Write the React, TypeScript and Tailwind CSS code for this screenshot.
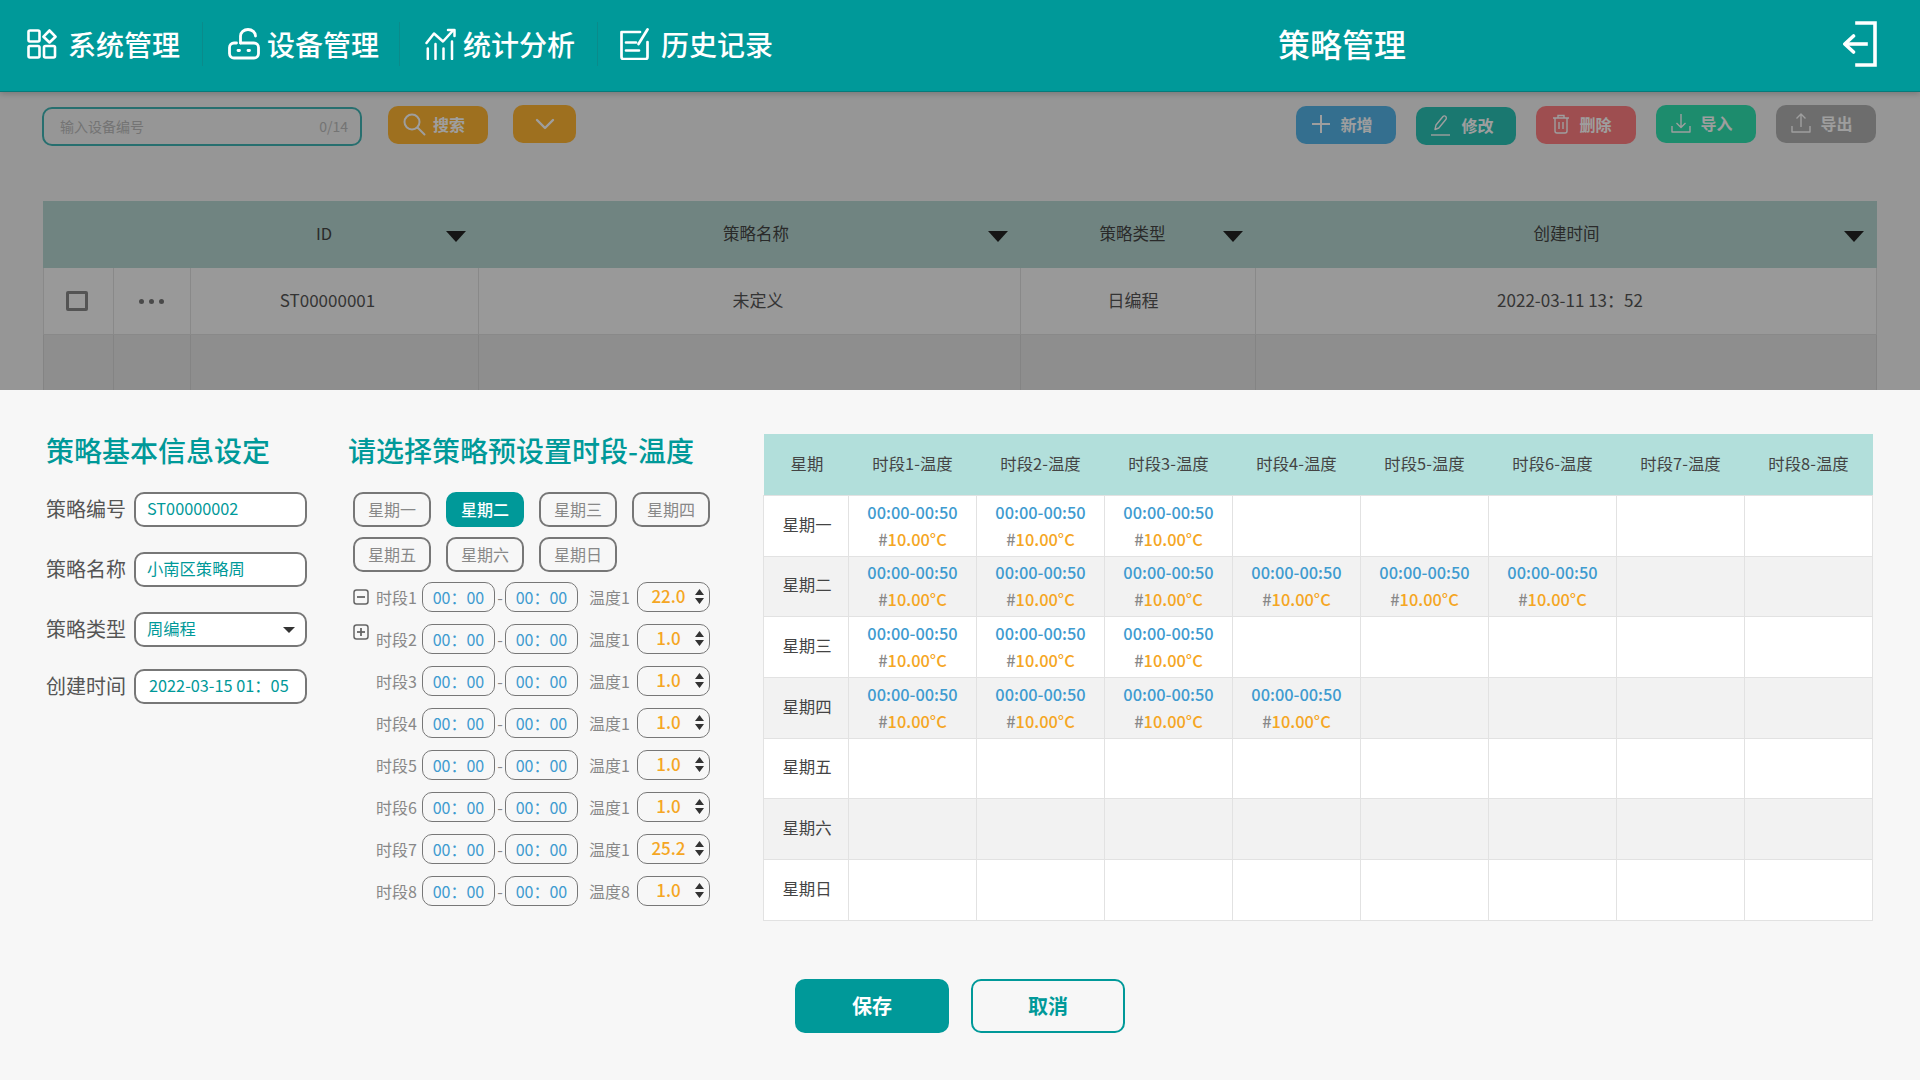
import { ReactNode } from "react";

const navIcons: Record<string, ReactNode> = {
  system: (
    <svg width="30" height="30" viewBox="0 0 30 30" fill="none" stroke="currentColor" strokeWidth="2.6" strokeLinejoin="round">
      <rect x="1.5" y="1.5" width="11" height="11" rx="1.5" />
      <path d="M22.5 1.5l6 6.2-6 5.800-6-5.800z" />
      <rect x="1.5" y="17" width="11" height="11.5" rx="1.5" />
      <rect x="17" y="17" width="11" height="11.5" rx="1.5" />
    </svg>
  ),
  device: (
    <svg width="32" height="32" viewBox="0 0 32 32" fill="none" stroke="currentColor" strokeWidth="2.8" strokeLinecap="round" strokeLinejoin="round">
      <path d="M12.5 15V8a7.500 6.500 0 0 1 15 0" />
      <path d="M8.500 15H6a4.500 4.500 0 0 0-4.500 4.500v6A4.500 4.500 0 0 0 6 30h20a4.500 4.500 0 0 0 4.500-4.500v-6A4.500 4.500 0 0 0 26 15H12.500" />
      <path d="M10 22.500h1.500M20 22.500h1.500" />
    </svg>
  ),
  chart: (
    <svg width="32" height="32" viewBox="0 0 32 32" fill="none" stroke="currentColor" strokeWidth="2.500" strokeLinecap="round" strokeLinejoin="round">
      <path d="M1.500 15L9 5.500l9 8L28 2.500" />
      <path d="M23 2h6.500v6" />
      <path d="M2.800 20.500V31M10.500 16V31M18.500 20.500V31M27 13.500V31" />
    </svg>
  ),
  record: (
    <svg width="30" height="32" viewBox="0 0 30 32" fill="none" stroke="currentColor" strokeWidth="2.700" strokeLinecap="round" strokeLinejoin="round">
      <path d="M20 4H1.500v25a2 2 0 0 0 2 2h22a2 2 0 0 0 2-2V14" />
      <path d="M6 14.500h10M6 22.500h13" />
      <path d="M18.500 16l9-14.500" />
    </svg>
  ),
};

const navItems = [
  { key: "system", label: "系统管理", width: "w-[203px]", pad: "pl-[27px]", gap: "gap-[11px]" },
  { key: "device", label: "设备管理", width: "w-[197px]", pad: "pl-[25px]", gap: "gap-[7px]" },
  { key: "chart", label: "统计分析", width: "w-[198px]", pad: "pl-[25px]", gap: "gap-[6px]" },
  { key: "record", label: "历史记录", width: "w-[200px]", pad: "pl-[22px]", gap: "gap-[11px]" },
];

function ToolButton({ bg, icon, label, shift = "" }: { bg: string; icon: ReactNode; label: string; shift?: string }) {
  return (
    <button className={`w-[100px] h-[38px] rounded-[10px] pr-[8px] pb-[2px] flex items-center justify-center gap-[9px] text-[16px] font-bold text-white ${bg} ${shift}`}>
      {icon}
      <span>{label}</span>
    </button>
  );
}

const columns = [
  { label: "", width: "w-[71px]", arrow: false, pad: "" },
  { label: "", width: "w-[77px]", arrow: false, pad: "" },
  { label: "ID", width: "w-[288px]", arrow: true, pad: "pr-[22px]" },
  { label: "策略名称", width: "w-[542px]", arrow: true, pad: "pl-[12px]" },
  { label: "策略类型", width: "w-[235px]", arrow: true, pad: "pr-[12px]" },
  { label: "创建时间", width: "flex-1", arrow: true, pad: "" },
];

const weekNames = ["星期一", "星期二", "星期三", "星期四", "星期五", "星期六", "星期日"];
const rowHeights = ["h-[61px]", "h-[60px]", "h-[61px]", "h-[61px]", "h-[60px]", "h-[61px]", "h-[61px]"];
const slots = [
  { id: 1, temp: "22.0", tempLabel: "温度1" },
  { id: 2, temp: "1.0", tempLabel: "温度1" },
  { id: 3, temp: "1.0", tempLabel: "温度1" },
  { id: 4, temp: "1.0", tempLabel: "温度1" },
  { id: 5, temp: "1.0", tempLabel: "温度1" },
  { id: 6, temp: "1.0", tempLabel: "温度1" },
  { id: 7, temp: "25.2", tempLabel: "温度1" },
  { id: 8, temp: "1.0", tempLabel: "温度8" },
];
const filledCounts = [3, 6, 3, 4, 0, 0, 0];

function FormRow({ label, value, select, className = "", textClass = "pl-[11px] text-[16.3px]" }: { label: string; value: string; select?: boolean; className?: string; textClass?: string }) {
  return (
    <div className={`flex items-center ${className}`}>
      <span className="w-[88px] text-[20px] text-[#555] pb-[2px]">{label}</span>
      <div className={`relative w-[173px] h-[35px] rounded-[10px] border-2 border-[#777] bg-white pb-[2px] flex items-center text-[#009999] ${textClass}`}>
        {value}
        {select && <span className="absolute right-[10px] top-[13px] border-x-[6px] border-t-[6px] border-x-transparent border-t-[#333]" />}
      </div>
    </div>
  );
}

function TimeBox() {
  return (
    <div className="w-[73px] h-[30px] rounded-[10px] border border-[#777] flex items-center justify-center text-[16px] text-[#3f9bd0] bg-[#f7f7f7]">
      00：00
    </div>
  );
}

function BoxIcon({ plus }: { plus?: boolean }) {
  return (
    <svg width="16" height="16" viewBox="0 0 16 16" fill="none" stroke="#666" strokeWidth="1.5">
      <rect x="1" y="1" width="14" height="14" rx="2.5" />
      <path d="M4 8h8" strokeWidth="1.8" />
      {plus && <path d="M8 4v8" strokeWidth="1.8" />}
    </svg>
  );
}

export default function App() {
  return (
    <div className="relative w-[1920px] h-[1080px] overflow-hidden bg-[#f2f2f2] font-['Noto_Sans_CJK_SC',sans-serif]">
      {/* 顶栏 */}
      <header className="relative z-20 h-[92px] pb-[3px] bg-[#009999] border-b border-[#067a7a] shadow-[0_2px_6px_rgba(0,0,0,0.2)] flex items-center text-white">
        <nav className="flex items-center">
          {navItems.map((item, i) => (
            <div
              key={item.key}
              className={`${item.width} ${item.pad} ${item.gap} h-[44px] flex items-center ${i < 3 ? "border-r border-[#0a8b8b]" : ""}`}
            >
              {navIcons[item.key]}
              <span className="text-[28px] leading-none font-medium">{item.label}</span>
            </div>
          ))}
        </nav>
        <div className="ml-auto flex items-center pr-[43px]">
          <h1 className="text-[32px] font-medium leading-none -translate-y-[1px]">策略管理</h1>
          <svg className="ml-[437px]" width="34" height="46" viewBox="0 0 34 46" fill="none" stroke="currentColor" strokeWidth="3.600" strokeLinecap="square">
            <path d="M14 2h18v42H14" />
            <path d="M23 23H4" />
            <path d="M10.500 15L1.800 23l8.700 8" strokeLinecap="round" strokeLinejoin="round" />
          </svg>
        </div>
      </header>

      {/* 工具栏 */}
      <div className="pl-[42px] pr-[44px] h-[109px] flex items-start">
        <div className="mt-[15px] w-[320px] h-[39px] rounded-[10px] border-[2.5px] border-[#40b4b4] pl-[16px] pr-[12px] flex items-center justify-between text-[14px] text-[#bbb]">
          <span>输入设备编号</span>
          <span>0/14</span>
        </div>
        <button className="ml-[26px] mt-[14px] w-[100px] h-[38px] rounded-[10px] bg-[#ffb532] pr-[9px] pb-[2px] flex items-center justify-center gap-[7px] text-[16px] font-bold text-white">
          <svg width="24" height="24" viewBox="0 0 24 24" fill="none" stroke="currentColor" strokeWidth="2" strokeLinecap="round">
            <circle cx="10" cy="10" r="7.500" />
            <path d="M15.500 15.500l7 7" />
          </svg>
          搜索
        </button>
        <button className="ml-[25px] mt-[13px] w-[63px] h-[38px] rounded-[10px] bg-[#ffb532] flex items-center justify-center text-white">
          <svg width="20" height="12" viewBox="0 0 20 12" fill="none" stroke="currentColor" strokeWidth="2.400" strokeLinecap="round" strokeLinejoin="round">
            <path d="M2 2l8 8 8-8" />
          </svg>
        </button>
        <div className="ml-auto flex gap-[20px]">
          <ToolButton
            bg="bg-[#55b3e7]"
            shift="mt-[14px]"
            label="新增"
            icon={
              <svg width="20" height="20" viewBox="0 0 20 20" stroke="currentColor" strokeWidth="2">
                <path d="M10 1v18M1 10h18" />
              </svg>
            }
          />
          <ToolButton
            bg="bg-[#2ac2b5]"
            shift="mt-[15px]"
            label="修改"
            icon={
              <svg width="22" height="22" viewBox="0 0 22 22" fill="none" stroke="currentColor" strokeWidth="1.400" strokeLinejoin="round">
                <path d="M5 15.500l1-4.500 7-8.500a1.800 1.800 0 0 1 3 .3l.3 1a2 2 0 0 1-.5 1.700l-7 8.500z" />
                <path d="M1 21h19" />
              </svg>
            }
          />
          <ToolButton
            bg="bg-[#ff7f81]"
            shift="mt-[14px]"
            label="删除"
            icon={
              <svg width="18" height="20" viewBox="0 0 18 20" fill="none" stroke="currentColor" strokeWidth="1.400">
                <path d="M1 4h16M6 4V1.500h6V4M3 4v13a2 2 0 0 0 2 2h8a2 2 0 0 0 2-2V4M7 8v7M11 8v7" />
              </svg>
            }
          />
          <ToolButton
            bg="bg-[#30e2b1]"
            shift="mt-[13px]"
            label="导入"
            icon={
              <svg width="20" height="20" viewBox="0 0 20 20" fill="none" stroke="currentColor" strokeWidth="1.400" strokeLinejoin="round">
                <path d="M1 13v6h18v-6M10 1v13M5.500 10l4.500 4.500 4.500-4.500" />
              </svg>
            }
          />
          <ToolButton
            bg="bg-[#b1b1b1]"
            shift="mt-[13px]"
            label="导出"
            icon={
              <svg width="20" height="20" viewBox="0 0 20 20" fill="none" stroke="currentColor" strokeWidth="1.400" strokeLinejoin="round">
                <path d="M1 13v6h18v-6M10 14V1M5.500 5.500L10 1l4.500 4.500" />
              </svg>
            }
          />
        </div>
      </div>

      {/* 列表 */}
      <div className="mx-[43px]">
        <div className="flex h-[67px] bg-[#b5d6d0] text-[16.5px] text-[#444]">
          {columns.map((col, i) => (
            <div key={i} className={`relative h-full pb-[3px] flex items-center justify-center ${col.width} ${col.pad}`}>
              {col.label}
              {col.arrow && (
                <span className="absolute right-[13px] top-[30px] border-x-[10px] border-t-[11px] border-x-transparent border-t-[#222]" />
              )}
            </div>
          ))}
        </div>
        <div className="flex h-[67px] bg-[#f7f7f7] text-[17px] text-[#555] border-b border-[#ddd]">
          <div className="w-[71px] pr-[4px] flex items-center justify-center border-x border-[#ddd]">
            <span className="w-[22px] h-[20px] rounded-[2px] border-[3px] border-[#888]" />
          </div>
          <div className="w-[77px] pr-[2px] flex items-center justify-center border-r border-[#ddd] gap-[5px]">
            {[0, 1, 2].map((d) => (
              <span key={d} className="w-[5px] h-[5px] rounded-full bg-[#777]" />
            ))}
          </div>
          <div className="w-[288px] pr-[14px] pb-[2px] flex items-center justify-center border-r border-[#ddd]">ST00000001</div>
          <div className="w-[542px] pl-[17px] pb-[2px] flex items-center justify-center border-r border-[#ddd]">未定义</div>
          <div className="w-[235px] pr-[10px] pb-[2px] flex items-center justify-center border-r border-[#ddd]">日编程</div>
          <div className="flex-1 pl-[8px] pb-[2px] flex items-center justify-center border-r border-[#ddd]">2022-03-11 13：52</div>
        </div>
        <div className="flex h-[60px] bg-[#e5e5e5]">
          <div className="w-[71px] border-x border-[#d6d6d6]" />
          <div className="w-[77px] border-r border-[#d6d6d6]" />
          <div className="w-[288px] border-r border-[#d6d6d6]" />
          <div className="w-[542px] border-r border-[#d6d6d6]" />
          <div className="w-[235px] border-r border-[#d6d6d6]" />
          <div className="flex-1 border-r border-[#d6d6d6]" />
        </div>
      </div>

      {/* 遮罩 */}
      <div className="absolute inset-0 z-10 bg-black/[0.38]" />

      {/* 弹层 */}
      <section className="absolute z-10 inset-x-0 bottom-0 top-[390px] bg-[#f7f7f7] pt-[44px] flex flex-col">
        <div className="flex">
          <div className="ml-[46px] w-[302px] -mt-[2px]">
            <h2 className="text-[28px] leading-[36px] text-[#009999] font-medium">策略基本信息设定</h2>
            <div className="mt-[24px]">
              <FormRow label="策略编号" value="ST00000002" />
              <FormRow label="策略名称" value="小南区策略周" className="mt-[25px]" />
              <FormRow label="策略类型" value="周编程" select className="mt-[25px]" />
              <FormRow label="创建时间" value="2022-03-15 01：05" className="mt-[22px]" textClass="pl-[13px] text-[16.3px]" />
            </div>
          </div>

          <div className="w-[416px] -mt-[2px]">
            <h2 className="text-[28px] leading-[36px] text-[#009999] font-medium">请选择策略预设置时段-温度</h2>
            <div className="mt-[24px] ml-[5px] w-[360px] flex flex-wrap gap-x-[15px] gap-y-[10px]">
              {weekNames.map((name) => (
                <div
                  key={name}
                  className={`w-[78px] h-[35px] pb-[2px] rounded-[10px] border-2 flex items-center justify-center text-[16px] ${
                    name === "星期二" ? "bg-[#009999] border-[#009999] text-white font-medium" : "border-[#777] text-[#888]"
                  }`}
                >
                  {name}
                </div>
              ))}
            </div>
            <div className="mt-[10px] ml-[6px] flex flex-col gap-[12px]">
              {slots.map((slot) => (
                <div key={slot.id} className="flex items-center h-[30px] text-[16px] text-[#888]">
                  <div className={`w-[22px] -ml-[1px] mr-[1px] ${slot.id === 2 ? "self-start" : ""}`}>
                    {slot.id === 1 && <BoxIcon />}
                    {slot.id === 2 && <BoxIcon plus />}
                  </div>
                  <span className="w-[46px]">时段{slot.id}</span>
                  <TimeBox />
                  <span className="w-[10px] text-center">-</span>
                  <TimeBox />
                  <span className="ml-[11px] w-[48px]">{slot.tempLabel}</span>
                  <div className="relative w-[73px] h-[30px] pb-[2px] rounded-[10px] border border-[#777] pl-[6px] pr-[16px] flex items-center justify-center text-[17px] font-medium text-[#f5a623]">
                    {slot.temp}
                    <svg className="absolute right-[5px] top-[6px]" width="9" height="15" viewBox="0 0 9 15" fill="#333">
                      <path d="M4.500 0L9 6H0zM4.500 15L0 9h9z" />
                    </svg>
                  </div>
                </div>
              ))}
            </div>
          </div>

          <table className="-ml-[1px] table-fixed border-collapse w-[1110px] text-[16.4px] text-[#444] text-center self-start">
            <colgroup>
              <col className="w-[85px]" />
              {[1, 2, 3, 4, 5, 6, 7, 8].map((n) => (
                <col key={n} />
              ))}
            </colgroup>
            <thead>
              <tr className="bg-[#b2dfdb] h-[61px]">
                <th className="font-normal pb-[2px] pl-[2px]">星期</th>
                {[1, 2, 3, 4, 5, 6, 7, 8].map((n) => (
                  <th key={n} className="font-normal pb-[2px]">
                    时段{n}-温度
                  </th>
                ))}
              </tr>
            </thead>
            <tbody>
              {weekNames.map((name, r) => (
                <tr key={name} className={`${rowHeights[r]} ${r % 2 ? "bg-[#f2f2f2]" : "bg-white"}`}>
                  <td className="border border-[#e2e2e2] pb-[3px] pl-[2px]">{name}</td>
                  {[0, 1, 2, 3, 4, 5, 6, 7].map((c) => (
                    <td key={c} className="border border-[#e2e2e2] leading-[27px] font-medium">
                      {c < filledCounts[r] && (
                        <>
                          <div className="text-[#3f9bd0]">00:00-00:50</div>
                          <div className="text-[#888]">
                            #<span className="text-[#f5a623]">10.00°C</span>
                          </div>
                        </>
                      )}
                    </td>
                  ))}
                </tr>
              ))}
            </tbody>
          </table>
        </div>

        <div className="ml-[795px] mt-[58px] flex gap-[22px] text-[20px] font-bold">
          <button className="w-[154px] h-[54px] rounded-[10px] bg-[#009999] text-white">保存</button>
          <button className="w-[154px] h-[54px] rounded-[10px] border-2 border-[#009999] text-[#009999]">取消</button>
        </div>
      </section>
    </div>
  );
}
